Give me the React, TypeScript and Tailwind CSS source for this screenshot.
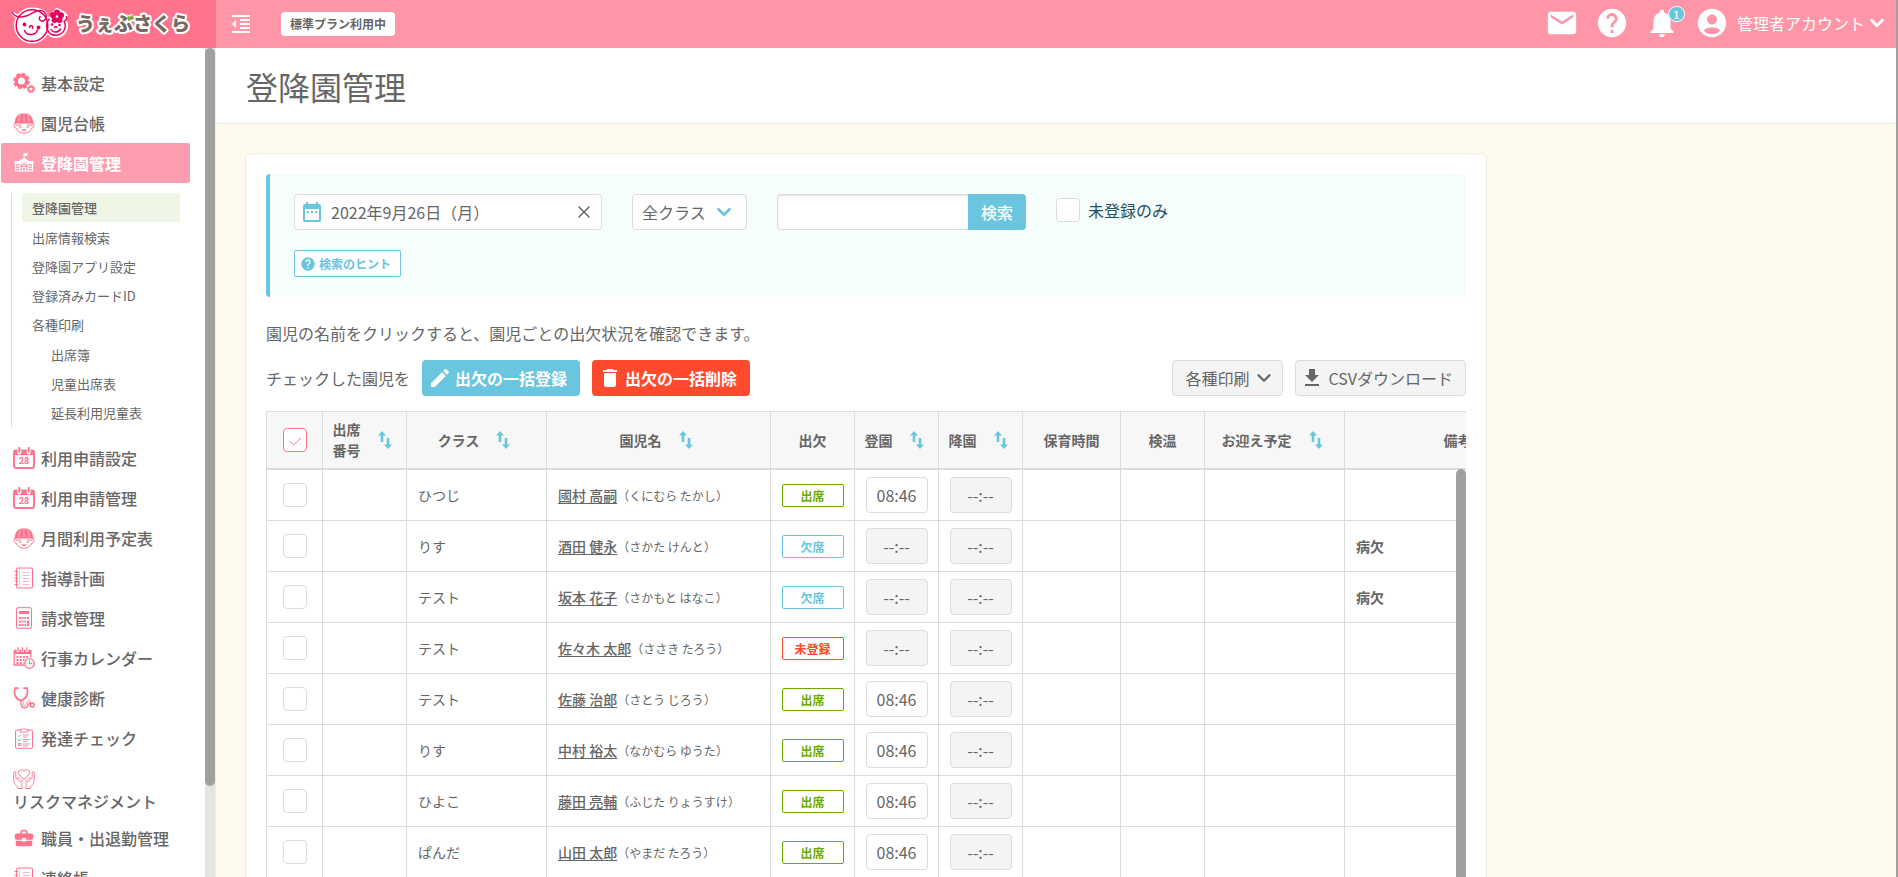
import { useState } from "react";
import type { ReactNode } from "react";
import {
  MdAccountCircle,
  MdBusinessCenter,
  MdCreate,
  MdDateRange,
  MdDelete,
  MdEmail,
  MdFileDownload,
  MdFormatIndentDecrease,
  MdHelp,
  MdNotifications,
} from "react-icons/md";
import { ChevronDown, X } from "lucide-react";

function NavSvg({ children }: { children: ReactNode }) {
  return (
    <svg viewBox="0 0 22 22" className="h-[22px] w-[22px] shrink-0" fill="none" stroke="currentColor" aria-hidden="true">
      {children}
    </svg>
  );
}

function GearsIcon() {
  return (
    <NavSvg>
      <circle cx="8.5" cy="9" r="5.200" strokeWidth="3.400" />
      <circle cx="8.5" cy="9" r="7.200" strokeWidth="2.200" strokeDasharray="3.600 2.050" />
      <circle cx="18" cy="17" r="2.400" strokeWidth="1.600" />
      <circle cx="18" cy="17" r="3.500" strokeWidth="1" strokeDasharray="1.800 .950" />
    </NavSvg>
  );
}

function KidIcon() {
  return (
    <NavSvg>
      <path d="M2 9.5C2 4.5 6 1.2 11 1.2s9 3.3 9 8.3l1.6 2H.4z" fill="currentColor" stroke="none" />
      <path d="M7.5 2.5C6 5 5.800 7.500 6 10M14.500 2.500C16 5 16.200 7.500 16 10M11 1v9" stroke="#fff" strokeWidth=".5" />
      <path d="M2.500 12C.5 12 .4 15.800 3 16c1.500 3.300 4.500 5.300 8 5.300s6.500-2 8-5.300c2.600-.2 2.500-4 .5-4M2.500 12.500c2 1.500 4.500.8 5.500-.5M19.500 12.500c-2 1.500-4.500.8-5.500-.5" strokeWidth="1" />
      <path d="M6.300 15h2M13.700 15h2" strokeWidth="1.600" />
      <path d="M8.500 17.200h5c-.6 2.300-4.400 2.300-5 0z" fill="currentColor" stroke="none" />
    </NavSvg>
  );
}

function SchoolIcon() {
  return (
    <NavSvg>
      <path d="M10.600 1h3.900v3h-3v2L16 9h4.500v3H14l-3-2.500L8 12H1.500V9H6l4.600-3z" fill="currentColor" stroke="none" />
      <path d="M2.500 12v7h17v-7M7 12v7M15 12v7M2.500 16.500H7M15 16.500h4.500" strokeWidth="1.200" />
      <circle cx="11" cy="12" r="1.500" strokeWidth="1" />
      <path d="M9.500 19v-3.500h3V19" strokeWidth="1.200" />
      <path d="M4 14h2M16 14h2" strokeWidth="1.600" />
    </NavSvg>
  );
}

function CalendarIcon() {
  return (
    <NavSvg>
      <rect x="1" y="3.500" width="20" height="17.500" rx="2" strokeWidth="1.900" />
      <path d="M1 3.500h20V8H1z" fill="currentColor" stroke="none" />
      <path d="M6.300.5v5M15.700.5v5" stroke="#fff" strokeWidth="4" strokeLinecap="round" />
      <path d="M6.300 1v4M15.700 1v4" strokeWidth="2" strokeLinecap="round" />
      <text x="11" y="17" textAnchor="middle" fontSize="9" fontWeight="700" fill="currentColor" stroke="none" fontFamily="Roboto, sans-serif">
        28
      </text>
    </NavSvg>
  );
}

function NotebookIcon() {
  return (
    <NavSvg>
      <rect x="3.500" y="1" width="16" height="20" rx="1.800" strokeWidth="1.100" />
      <path d="M6.500 1v20" strokeWidth=".4" />
      <path d="M1.500 4.500h3.500M1.500 8h3.500M1.500 11h3.500M1.500 14h3.500M1.500 17.500h3.500" strokeWidth="1.100" />
      <path d="M9.500 5.500h7M9.500 8.500h7M9.500 11.500h7M9.500 14.500h7M9.500 17.500h7" strokeWidth=".5" />
    </NavSvg>
  );
}

function CalculatorIcon() {
  return (
    <NavSvg>
      <rect x="3.500" y=".7" width="15" height="20.600" rx="1.500" strokeWidth="1" />
      <path d="M6 4h10v3H6z" fill="currentColor" stroke="none" />
      <path d="M6 11h7M6 14.500h7M6 18h7" strokeWidth="2" strokeDasharray="1.800 .9" />
      <path d="M15 10v2M15 13.500V19" strokeWidth="2" />
    </NavSvg>
  );
}

function EventIcon() {
  return (
    <NavSvg>
      <path d="M11 18H1.200V3.500h16.600V10" strokeWidth="1.300" />
      <path d="M1 3h17v4H1z" fill="currentColor" stroke="none" />
      <path d="M5 0v5M9.500 0v5M14 0v5" stroke="#fff" strokeWidth="2.600" />
      <path d="M5 .3v4M9.500 .3v4M14 .3v4" strokeWidth="1.200" />
      <path d="M3.500 10h12M3.500 13h8M3.500 16h7" strokeWidth="1.800" strokeDasharray="2 1.200" />
      <circle cx="16.500" cy="16.500" r="4.800" fill="#fff" strokeWidth="1.300" />
      <path d="M16.500 13.500v3.200h2.700" strokeWidth="1.200" />
    </NavSvg>
  );
}

function StethoscopeIcon() {
  return (
    <NavSvg>
      <path d="M5 1.200H2C.5 6 2 12 7.800 13.500 13.500 12 15.500 6 14 1.200h-3" strokeWidth="1.700" strokeLinecap="round" />
      <path d="M7.800 13.500c-.3 4 .8 7.300 4 7.300 4.200 0 2.500-5.500 6-5.800" strokeWidth="1.300" />
      <path d="M10 13.500c0 3 .3 5.200 1.800 5.200 1.500 0 1.700-5.300 5.500-6" strokeWidth=".8" />
      <circle cx="19.300" cy="18" r="2" strokeWidth="1.500" />
    </NavSvg>
  );
}

function ClipboardIcon() {
  return (
    <NavSvg>
      <rect x="2.500" y="3" width="17" height="18.300" rx="1.300" strokeWidth="1" />
      <path d="M7 5V2.500h2.500C10 .5 12 .5 12.500 2.500H15V5z" fill="#fff" strokeWidth=".9" />
      <path d="M5 8.500l1.200 1.200L8 7.500M5 13l1.200 1.200L8 12" strokeWidth=".9" />
      <path d="M5.500 16.500H8v2H5.500z" strokeWidth=".9" />
      <path d="M10 8h6M10 10h4M10 12.500h7M10 14.500h5M10 17h7M10 19h5" strokeWidth=".8" />
    </NavSvg>
  );
}

function HandsIcon() {
  return (
    <NavSvg>
      <path d="M11 11C7.500 8.500 5.500 6.500 5.500 4.300c0-2.800 4-3.800 5.500-1 1.500-2.800 5.500-1.800 5.500 1 0 2.200-2 4.200-5.500 6.700z" strokeWidth="1" />
      <path d="M.8 4.500c0-1.200 2-1.200 2 0v5l5 5c1.200 1.200 1.400 3 1.400 6H4.800c0-3-4-4.500-4-7zM4 11c0-2 2-1.500 3.500.5l2 2.500" strokeWidth=".9" />
      <path d="M21.200 4.500c0-1.200-2-1.200-2 0v5l-5 5c-1.200 1.200-1.400 3-1.400 6h4.400c0-3 4-4.500 4-7zM18 11c0-2-2-1.500-3.500.5l-2 2.500" strokeWidth=".9" />
    </NavSvg>
  );
}

function SortIcon() {
  return (
    <svg viewBox="0 0 19 18" className="h-[18px] w-[19px] shrink-0" fill="#6ac5df" aria-hidden="true">
      <path d="M4 0l4 4.500H5.300V11H2.700V4.500H0z" />
      <path d="M10 18l-4-4.500h2.700V7h2.600v6.500H14z" />
    </svg>
  );
}

function Logo() {
  return (
    <svg viewBox="0 0 196 48" className="h-12 w-[196px]" role="img" aria-label="うぇぶさくら">
      <g stroke="#fff" fill="#fff" strokeWidth="4" strokeLinejoin="round">
        <circle cx="32" cy="25.500" r="16" />
        <circle cx="56" cy="26" r="10" />
        <path d="M13 13c3 5 12 5 19 0 8-6 17 0 12 7" fill="none" />
        <path d="M57 10l6 3 3 3-3 7-8 1-4-6z" />
      </g>
      <g fill="none" stroke="#e4005f" strokeWidth="1.500" strokeLinecap="round" strokeLinejoin="round">
        <circle cx="32" cy="25.500" r="15.800" />
        <path d="M12.500 13c2 4 9 5 15 2.500 5-2 8-5.500 13-5 5 .5 8 7 3.500 10-3 1.800-6-1-4-3.800" />
        <path d="M49 19c-3 3-3.500 9 0 13.500 4 4.500 12 3.500 15-2 2-4 1.500-7 0-9 2-1 3-3 2.500-5" />
        <path d="M24.500 30.500c2 5.500 11 5.500 13-.5M29.500 27.500c0-2.500 4-2.500 3 .8M51 29.500c2 3.500 7 3.500 9.500-.5M54.500 27.500c.5-1.500 2-1.500 2.500 0" />
      </g>
      <g fill="#e4005f">
        <circle cx="24.500" cy="24.500" r="1.900" />
        <circle cx="38.500" cy="27.500" r="1.900" />
        <circle cx="52" cy="24.500" r="1.300" />
        <circle cx="59.500" cy="25" r="1.300" />
        <circle cx="57" cy="12.500" r="3" />
        <circle cx="61" cy="15.300" r="3" />
        <circle cx="59.500" cy="20" r="3" />
        <circle cx="54.500" cy="20" r="3" />
        <circle cx="53" cy="15.300" r="3" />
      </g>
      <text
        x="76"
        y="31"
        fontSize="19"
        fontWeight="900"
        fill="#776864"
        stroke="#fff"
        strokeWidth="4"
        strokeLinejoin="round"
        paintOrder="stroke"
      >
        うぇぶさくら
      </text>
      <path d="M128.500 17l1.500 2.500M131.500 16l1.500 2.500" stroke="#7ab929" strokeWidth="2" strokeLinecap="round" />
    </svg>
  );
}

const subNav = [
  { label: "登降園管理", active: true },
  { label: "出席情報検索" },
  { label: "登降園アプリ設定" },
  { label: "登録済みカードID" },
  { label: "各種印刷" },
];

const printNav = ["出席簿", "児童出席表", "延長利用児童表"];

const nav = [
  { label: "利用申請設定", icon: <CalendarIcon /> },
  { label: "利用申請管理", icon: <CalendarIcon /> },
  { label: "月間利用予定表", icon: <KidIcon /> },
  { label: "指導計画", icon: <NotebookIcon /> },
  { label: "請求管理", icon: <CalculatorIcon /> },
  { label: "行事カレンダー", icon: <EventIcon /> },
  { label: "健康診断", icon: <StethoscopeIcon /> },
  { label: "発達チェック", icon: <ClipboardIcon /> },
  { label: "リスクマネジメント", icon: <HandsIcon />, wrap: true },
  { label: "職員・出退勤管理", icon: <MdBusinessCenter className="h-[22px] w-[22px] shrink-0" /> },
  { label: "連絡帳", icon: <NotebookIcon /> },
];

function NavItem({ label, icon, active, wrap }: { label: string; icon: ReactNode; active?: boolean; wrap?: boolean }) {
  if (wrap) {
    return (
      <a href="#" className="flex h-[60px] flex-col pt-2.5 pl-[13px] text-base leading-[22px] font-medium">
        <span className="text-[#ff738c]">{icon}</span>
        {label}
      </a>
    );
  }
  return active ? (
    <a href="#" className="mr-[15px] ml-px flex h-10 items-center gap-1.5 rounded-xs bg-[#ff9db0] pl-3 text-base font-bold text-white">
      {icon}
      {label}
    </a>
  ) : (
    <a href="#" className="flex h-10 items-center gap-1.5 pl-[13px] text-base font-medium">
      <span className="text-[#ff738c]">{icon}</span>
      {label}
    </a>
  );
}

function Sidebar() {
  return (
    <aside className="flex w-[216px] shrink-0 flex-col">
      <a href="#" className="block h-12 shrink-0 overflow-hidden bg-[#ff738c]">
        <Logo />
      </a>
      <div className="flex min-h-0 flex-1 border-r border-[#ececec]">
        <nav className="min-w-0 flex-1 overflow-hidden pt-[15px]">
          <NavItem label="基本設定" icon={<GearsIcon />} />
          <NavItem label="園児台帳" icon={<KidIcon />} />
          <NavItem label="登降園管理" icon={<SchoolIcon />} active />
          <div className="mt-2.5 mr-[25px] mb-[11px] ml-[11px] flex flex-col gap-px border-l border-[#dcdcdc] pl-2.5 text-[13px] leading-[29px]">
            <ul>
              {subNav.map((s) => (
                <li key={s.label}>
                  <a href="#" className={s.active ? "mb-px block rounded-xs bg-[#f0f6e6] pl-2.5 font-medium" : "block pl-2.5"}>
                    {s.label}
                  </a>
                </li>
              ))}
            </ul>
            <ul className="pl-[29px]">
              {printNav.map((label) => (
                <li key={label}>
                  <a href="#" className="block">
                    {label}
                  </a>
                </li>
              ))}
            </ul>
          </div>
          {nav.map((n) => (
            <NavItem key={n.label} {...n} />
          ))}
        </nav>
        <div className="w-2.5 bg-[#e4e4e4]">
          <div className="h-[89%] rounded-full bg-[#a0a0a0]" />
        </div>
      </div>
    </aside>
  );
}

function TopBar() {
  return (
    <header className="flex h-12 shrink-0 items-center bg-[#ff96a8] pr-2 pl-[13px] text-white">
      <button type="button" aria-label="メニューを閉じる">
        <MdFormatIndentDecrease className="h-6 w-6" />
      </button>
      <span className="ml-7 rounded-sm bg-white px-[9px] text-xs leading-6 font-bold text-[#666]">標準プラン利用中</span>
      <div className="ml-auto flex items-center gap-4 pb-0.5">
        <a href="#" aria-label="メール">
          <MdEmail className="h-[34px] w-[34px]" />
        </a>
        <a href="#" aria-label="ヘルプ">
          <MdHelp className="h-[34px] w-[34px]" />
        </a>
        <a href="#" aria-label="お知らせ" className="relative">
          <MdNotifications className="h-[34px] w-[34px]" />
          <span className="absolute top-0 left-[23px] flex h-4 w-[17px] items-center justify-center rounded-full border border-white bg-[#6ac5df] text-[11px] font-medium">
            1
          </span>
        </a>
        <button type="button" className="flex items-center text-base">
          <MdAccountCircle className="mr-2 h-[34px] w-[34px]" />
          管理者アカウント
          <ChevronDown className="ml-px h-[22px] w-[22px]" strokeWidth={3} />
        </button>
      </div>
    </header>
  );
}

function SearchBox() {
  const [date, setDate] = useState("2022年9月26日（月）");
  return (
    <form className="rounded-sm border-l-4 border-[#6ac5df] bg-[#f6fdfd] py-5 pl-6">
      <div className="flex flex-wrap gap-[30px]">
        <label className="flex h-9 w-[308px] items-center rounded-sm border border-[#dcdcdc] bg-white pr-[7px] pl-[5px]">
          <MdDateRange className="h-6 w-6 shrink-0 text-[#6ac5df]" />
          <input
            aria-label="日付"
            value={date}
            onChange={(e) => setDate(e.target.value)}
            className="ml-[7px] min-w-0 flex-1 text-base outline-none"
          />
          <button type="button" aria-label="クリア" onClick={() => setDate("")}>
            <X className="h-5 w-5" strokeWidth={1.75} />
          </button>
        </label>
        <div className="relative">
          <select
            aria-label="クラス"
            className="h-9 w-[115px] appearance-none rounded-sm border border-[#dcdcdc] bg-white pl-[9px] text-base outline-none"
          >
            <option>全クラス</option>
            <option>ひつじ</option>
            <option>りす</option>
            <option>テスト</option>
          </select>
          <ChevronDown className="pointer-events-none absolute top-[7px] right-3 h-[22px] w-[22px] text-[#6ac5df]" strokeWidth={3} />
        </div>
        <div className="flex">
          <input
            aria-label="キーワード"
            className="h-9 w-[191px] rounded-l-sm border border-r-0 border-[#dcdcdc] bg-white px-2 shadow-[inset_0_1px_2px_rgba(0,0,0,0.12)] outline-none"
          />
          <button type="submit" className="h-9 w-[58px] rounded-r-sm bg-[#6ac5df] text-base font-medium text-white">
            検索
          </button>
        </div>
        <label className="flex h-8 items-center gap-2 text-base text-[#22505e]">
          <input type="checkbox" className="h-6 w-6 appearance-none rounded-sm border border-[#dcdcdc] bg-white" />
          未登録のみ
        </label>
      </div>
      <button
        type="button"
        className="mt-5 flex h-[27px] items-center gap-[3px] rounded-[2px] border border-[#6ac5df] bg-white pr-[9px] pl-[5px] text-xs font-bold text-[#6ac5df]"
      >
        <MdHelp className="h-4 w-4" />
        検索のヒント
      </button>
    </form>
  );
}

const columns = [
  { label: "出席\n番号", width: "w-[84px]", sort: true },
  { label: "クラス", width: "w-[140px]", sort: true },
  { label: "園児名", width: "w-[224px]", sort: true },
  { label: "出欠", width: "w-[84px]" },
  { label: "登園", width: "w-[84px]", sort: true },
  { label: "降園", width: "w-[84px]", sort: true },
  { label: "保育時間", width: "w-[98px]" },
  { label: "検温", width: "w-[84px]" },
  { label: "お迎え予定", width: "w-[140px]", sort: true },
  { label: "備考", width: "w-[226px]" },
];

const badge = {
  出席: "border-[#6aaa00] text-[#6aaa00]",
  欠席: "border-[#6ac5df] text-[#6ac5df]",
  未登録: "border-[#ff4a2e] text-[#ff4a2e]",
};

type Child = { room: string; name: string; kana: string; status: keyof typeof badge; time?: string; note?: string };

const children: Child[] = [
  { room: "ひつじ", name: "國村 高嗣", kana: "くにむら たかし", status: "出席", time: "08:46" },
  { room: "りす", name: "酒田 健永", kana: "さかた けんと", status: "欠席", note: "病欠" },
  { room: "テスト", name: "坂本 花子", kana: "さかもと はなこ", status: "欠席", note: "病欠" },
  { room: "テスト", name: "佐々木 太郎", kana: "ささき たろう", status: "未登録" },
  { room: "テスト", name: "佐藤 治郎", kana: "さとう じろう", status: "出席", time: "08:46" },
  { room: "りす", name: "中村 裕太", kana: "なかむら ゆうた", status: "出席", time: "08:46" },
  { room: "ひよこ", name: "藤田 亮輔", kana: "ふじた りょうすけ", status: "出席", time: "08:46" },
  { room: "ぱんだ", name: "山田 太郎", kana: "やまだ たろう", status: "出席", time: "08:46" },
];

function TimeInput({ label, value }: { label: string; value?: string }) {
  return (
    <input
      aria-label={label}
      readOnly
      value={value ?? "--:--"}
      className={
        value
          ? "mx-auto block h-9 w-[62px] rounded-sm border border-[#dcdcdc] bg-white text-center text-base outline-none"
          : "mx-auto block h-9 w-[62px] rounded-sm border border-[#dcdcdc] bg-[#f4f4f4] text-center text-base outline-none"
      }
    />
  );
}

function AttendanceTable() {
  const cell = "h-[51px] border-b border-l border-[#dcdcdc] p-0";
  return (
    <div className="relative mt-[15px] overflow-hidden">
      <table className="w-[1304px] table-fixed border-separate border-spacing-0 text-sm">
        <thead>
          <tr className="bg-[#f7f7f7]">
            <th className="h-[59px] w-14 border-t border-b-2 border-l border-[#dcdcdc] p-0">
              <label className="relative mx-auto block h-6 w-6">
                <input
                  type="checkbox"
                  defaultChecked
                  aria-label="すべて選択"
                  className="peer block h-6 w-6 appearance-none rounded-sm border border-[#ff738c] bg-white"
                />
                <svg
                  viewBox="0 0 24 24"
                  fill="none"
                  stroke="#ff738c"
                  className="pointer-events-none absolute inset-0 hidden peer-checked:block"
                >
                  <path d="M6.500 13l4.200 4 7-7" />
                </svg>
              </label>
            </th>
            {columns.map((c) => (
              <th key={c.label} className={`${c.width} h-[59px] border-t border-b-2 border-l border-[#dcdcdc] p-0 leading-[21px] font-bold`}>
                <div className="flex items-center justify-center gap-[17px] whitespace-pre">
                  {c.label}
                  {c.sort && (
                    <button type="button" aria-label={`${c.label}で並べ替え`}>
                      <SortIcon />
                    </button>
                  )}
                </div>
              </th>
            ))}
          </tr>
        </thead>
        <tbody>
          {children.map((c) => (
            <tr key={c.name}>
              <td className={cell}>
                <input
                  type="checkbox"
                  aria-label={`${c.name}を選択`}
                  className="mx-auto block h-6 w-6 appearance-none rounded-sm border border-[#dcdcdc] bg-white"
                />
              </td>
              <td className={cell} />
              <td className={cell}>
                <span className="pl-[11px]">{c.room}</span>
              </td>
              <td className={cell}>
                <div className="pl-[11px] whitespace-nowrap">
                  <a href="#" className="font-medium underline underline-offset-2">
                    {c.name}
                  </a>
                  <span className="text-xs">（{c.kana}）</span>
                </div>
              </td>
              <td className={cell}>
                <span className={`${badge[c.status]} mx-auto block w-[62px] rounded-[2px] border text-center text-xs leading-[21px] font-bold`}>
                  {c.status}
                </span>
              </td>
              <td className={cell}>
                <TimeInput label={`${c.name}の登園時刻`} value={c.time} />
              </td>
              <td className={cell}>
                <TimeInput label={`${c.name}の降園時刻`} />
              </td>
              <td className={cell} />
              <td className={cell} />
              <td className={cell} />
              <td className={cell}>
                <span className="pl-[11px] font-bold">{c.note}</span>
              </td>
            </tr>
          ))}
        </tbody>
      </table>
      <div className="absolute top-[58px] right-0 bottom-0 w-2.5 rounded-t-full bg-[#a0a0a0]" />
    </div>
  );
}

export default function App() {
  return (
    <div className="flex h-screen overflow-hidden bg-white font-['Noto_Sans_CJK_JP','Noto_Sans',sans-serif] text-[#666]">
      <Sidebar />
      <div className="flex min-w-0 flex-1 flex-col">
        <TopBar />
        <h1 className="shrink-0 border-b border-[#ececec] pt-3.5 pb-[13px] pl-[30px] text-[32px] leading-[48px]">登降園管理</h1>
        <main className="min-h-0 flex-1 overflow-hidden bg-[#fffaee] px-[29px] pt-[29px]">
          <section className="max-w-[1242px] rounded-md border border-[#f0ecdf] bg-white p-5">
            <SearchBox />
            <p className="mt-6 text-base leading-6">園児の名前をクリックすると、園児ごとの出欠状況を確認できます。</p>
            <div className="mt-[15px] flex items-center text-base">
              <span className="mr-3">チェックした園児を</span>
              <button type="button" className="mr-3 flex h-9 items-center gap-[3px] rounded-sm bg-[#6ac5df] pr-[13px] pl-1.5 font-bold text-white">
                <MdCreate className="h-6 w-6" />
                出欠の一括登録
              </button>
              <button type="button" className="flex h-9 items-center gap-[3px] rounded-sm bg-[#ff4a2e] pr-[13px] pl-1.5 font-bold text-white">
                <MdDelete className="h-6 w-6" />
                出欠の一括削除
              </button>
              <button
                type="button"
                className="mr-3 ml-auto flex h-9 items-center gap-1 rounded-sm border border-[#dcdcdc] bg-[#f4f4f4] pr-[7px] pl-3"
              >
                各種印刷
                <ChevronDown className="h-[22px] w-[22px]" strokeWidth={2.5} />
              </button>
              <button type="button" className="flex h-9 items-center gap-1 rounded-sm border border-[#dcdcdc] bg-[#f4f4f4] pr-3 pl-1">
                <MdFileDownload className="h-6 w-6" />
                CSVダウンロード
              </button>
            </div>
            <AttendanceTable />
          </section>
        </main>
      </div>
      <div className="w-0.5 shrink-0 bg-[#a0a0a0]" />
    </div>
  );
}
